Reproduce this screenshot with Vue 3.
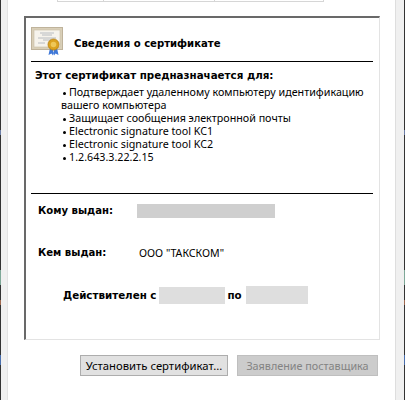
<script setup>
const purposes = [
  'Защищает сообщения электронной почты',
  'Electronic signature tool KC1',
  'Electronic signature tool KC2',
  '1.2.643.3.22.2.15',
]
</script>

<template>
  <div class="root">
    <div class="desk-edge"></div>
    <div class="side side-left"></div>
    <main class="sheet">
      <div class="tabs">
        <span class="tab t1"></span>
        <span class="tab t2"></span>
        <span class="tab t3"></span>
      </div>
      <section class="panel">
        <header class="title-row">
          <svg class="cert" width="33" height="29" viewBox="0 0 33 29">
            <rect x="0.5" y="0.5" width="31" height="22" fill="#d9cfb8" stroke="#bfb39b" />
            <rect x="3" y="3" width="26" height="17" fill="#f6f3ec" stroke="#c9bea6" stroke-width="0.6" />
            <path d="M9 6h14M11 8h10M7 11h18M12 13h8M7 16h7" stroke="#a9adb8" stroke-width="0.8" fill="none" />
            <path d="M19 21l-1.500 7 3-1.500 1.500 2 1-5zM26 21l1.500 7-3-1.500-1.500 2-1-5z" fill="#3f78d8" />
            <circle cx="22.500" cy="17.500" r="5.500" fill="#dba21f" stroke="#b57f10" stroke-width="0.8" />
            <circle cx="22.500" cy="17.500" r="2.800" fill="#eec757" />
          </svg>
          <h2 class="title">Сведения о сертификате</h2>
        </header>
        <hr class="rule" />
        <h3 class="heading">Этот сертификат предназначается для:</h3>
        <ul class="purposes">
          <li><i class="dot"></i>Подтверждает удаленному компьютеру идентификацию<br /><span class="wrap">вашего компьютера</span></li>
          <li v-for="p in purposes" :key="p"><i class="dot"></i>{{ p }}</li>
        </ul>
        <hr class="rule rule2" />
        <div class="field f1">
          <b class="label">Кому выдан:</b>
          <span class="redact r1"></span>
        </div>
        <div class="field f2">
          <b class="label">Кем выдан:</b>
          <span class="value">ООО "ТАКСКОМ"</span>
        </div>
        <div class="validity">
          <b>Действителен с</b>
          <span class="redact r2"></span>
          <b>по</b>
          <span class="redact r3"></span>
        </div>
      </section>
      <footer class="actions">
        <button class="btn b1" type="button">Установить сертификат...</button>
        <button class="btn b2" type="button" disabled>Заявление поставщика</button>
      </footer>
    </main>
    <div class="side side-right"></div>
    <div class="desk-edge"></div>
  </div>
</template>

<style scoped>
.root {
  width: 405px;
  height: 400px;
  display: flex;
  overflow: hidden;
  background: #fff;
  font-family: "Noto Sans", sans-serif;
  font-size: 10.5px;
  color: #000;
}
.desk-edge {
  width: 1px;
  flex: none;
  background: linear-gradient(#333 0 130px, #6d7fa8 130px 135px, #333 135px 270px, #7fa898 270px 285px, #333 285px 300px, #a06a50 300px 305px, #333 305px 355px, #4a6fae 355px 365px, #333 365px);
}
.side {
  flex: none;
  background: #f0f0f0;
}
.side-left {
  width: 6px;
  border-right: 1px solid #e3e3e3;
}
.side-right {
  width: 8px;
  border-left: 1px solid #dedede;
}
.sheet {
  width: 387px;
  flex: none;
  display: flex;
  flex-direction: column;
  padding-left: 16px;
  box-sizing: border-box;
}
.tabs {
  height: 16px;
  display: flex;
  align-items: flex-start;
  margin-left: 33px;
}
.tab {
  height: 2px;
  box-sizing: border-box;
  background: #fff;
  border-bottom: 1px solid #d6d6d6;
  border-left: 1px solid #d6d6d6;
}
.t1 { width: 46px; }
.t2 { width: 111px; }
.t3 { width: 110px; border-right: 1px solid #d6d6d6; }
.panel {
  width: 356px;
  height: 324px;
  box-sizing: border-box;
  border-top: 2px solid #696969;
  border-left: 2px solid #696969;
  border-right: 1px solid #e3e3e3;
  border-bottom: 1px solid #e3e3e3;
  padding: 9px 6px 0 5px;
}
.title-row {
  height: 34px;
  display: flex;
  align-items: flex-start;
}
.cert {
  flex: none;
}
.title {
  margin: 9px 0 0 10px;
  font: 700 10.1px/15px "DejaVu Sans", sans-serif;
}
.rule {
  margin: 0;
  border: 0;
  height: 1px;
  background: #000;
}
.heading {
  margin: 6px 0 0 4px;
  font: 700 10.3px/15px "DejaVu Sans", sans-serif;
}
.purposes {
  list-style: none;
  margin: 3px 0 0;
  padding: 0 0 0 30px;
  font-size: 10.72px;
  line-height: 13px;
}
.dot {
  display: inline-block;
  width: 3px;
  height: 3px;
  margin: 0 3px 0 2px;
  border-radius: 50%;
  background: #000;
  vertical-align: 1.5px;
}
.rule2 {
  margin-top: 29px;
}
.field {
  display: flex;
  align-items: center;
  padding-left: 7px;
  height: 15px;
}
.f1 { margin-top: 9px; }
.f2 { margin-top: 27px; }
.label {
  width: 99px;
  flex: none;
  font: 700 10.1px/15px "DejaVu Sans", sans-serif;
}
.value {
  margin-left: 2px;
  font-size: 10.6px;
}
.redact {
  display: inline-block;
  flex: none;
}
.r1 {
  width: 138px;
  height: 14px;
  background: #cfcfcf;
}
.validity {
  display: flex;
  align-items: center;
  margin-top: 26px;
  padding-left: 32px;
  height: 18px;
  font: 700 10.3px/15px "DejaVu Sans", sans-serif;
}
.r2 {
  width: 66px;
  height: 17px;
  margin-left: 3px;
  margin-right: 2px;
  background: #dedede;
}
.r3 {
  width: 62px;
  height: 18px;
  margin-left: 4px;
  background: #dedede;
}
.actions {
  display: flex;
  margin-top: 15px;
  margin-left: 56px;
  gap: 9px;
}
.btn {
  height: 21px;
  padding: 0;
  box-sizing: border-box;
  font: 10.8px/17px "Noto Sans", sans-serif;
}
.b1 {
  width: 148px;
  font-size: 11.3px;
  background: #e1e1e1;
  border: 1px solid #adadad;
  color: #000;
}
.b2 {
  width: 141px;
  background: #cccccc;
  border: 1px solid #bfbfbf;
  color: #838383;
}
</style>

<style>
body { margin: 0; }
</style>
